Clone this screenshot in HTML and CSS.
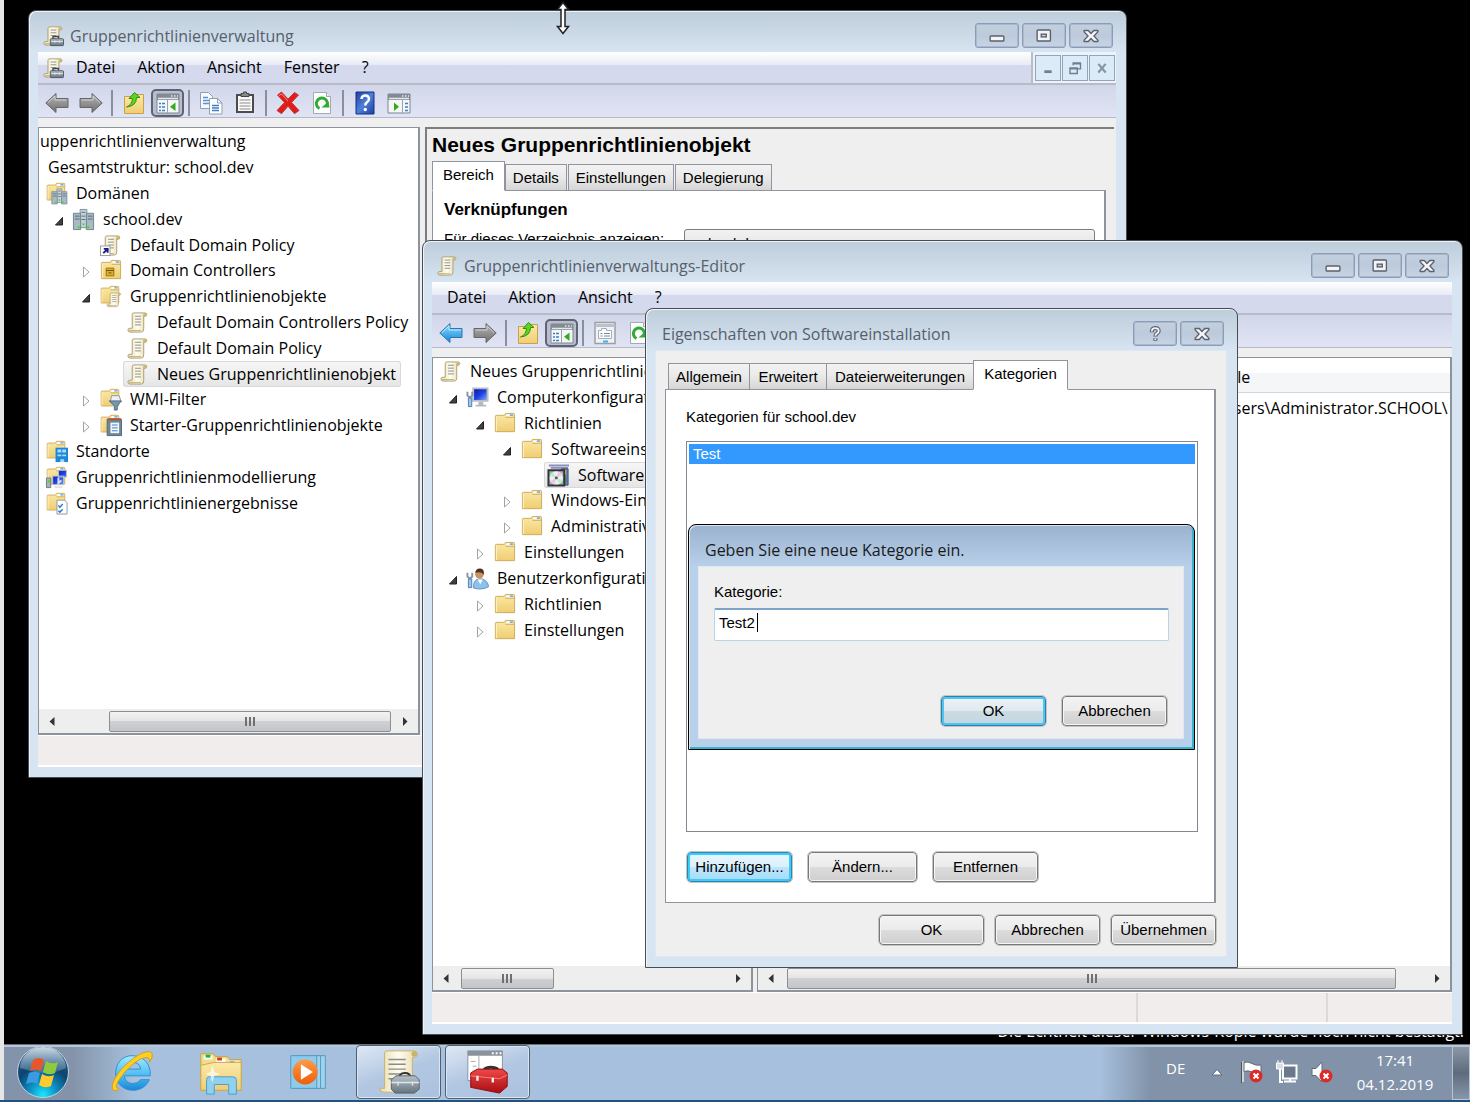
FILE: index.html
```
<!DOCTYPE html>
<html lang="de">
<head>
<meta charset="utf-8">
<title>Gruppenrichtlinienverwaltung</title>
<link rel="stylesheet" href="styles.css">
</head>
<body>
<svg class="sprite" aria-hidden="true">
  <defs>
    <linearGradient id="paper" x1="0" x2="1" y1="0" y2="0"><stop offset="0" stop-color="#e9dcae"/><stop offset=".5" stop-color="#fffdf0"/><stop offset="1" stop-color="#e6d9ac"/></linearGradient>
    <linearGradient id="fold" x1="0" x2="0" y1="0" y2="1"><stop offset="0" stop-color="#fbe9a8"/><stop offset="1" stop-color="#f0cd72"/></linearGradient>
    <linearGradient id="grayarrow" x1="0" x2="0" y1="0" y2="1"><stop offset="0" stop-color="#b5b5b5"/><stop offset="1" stop-color="#707070"/></linearGradient>
    <linearGradient id="bluearrow" x1="0" x2="0" y1="0" y2="1"><stop offset="0" stop-color="#8fdcff"/><stop offset="1" stop-color="#1586d8"/></linearGradient>
    <linearGradient id="screen" x1="0" x2="1" y1="0" y2="1"><stop offset="0" stop-color="#0a14a8"/><stop offset=".5" stop-color="#1d3fe0"/><stop offset="1" stop-color="#8fb6ff"/></linearGradient>
    <linearGradient id="helpblue" x1="0" x2="1" y1="0" y2="1"><stop offset="0" stop-color="#1c3f9e"/><stop offset=".5" stop-color="#4f7fdc"/><stop offset="1" stop-color="#1c3f9e"/></linearGradient>
    <radialGradient id="orb" cx=".5" cy=".95" r=".95"><stop offset="0" stop-color="#16e8ff"/><stop offset=".3" stop-color="#0d8cc0"/><stop offset=".6" stop-color="#0d4470"/><stop offset="1" stop-color="#35597c"/></radialGradient>
    <linearGradient id="gloss" x1="0" x2="0" y1="0" y2="1"><stop offset="0" stop-color="#e8f2f8" stop-opacity=".85"/><stop offset="1" stop-color="#7fa6c0" stop-opacity=".35"/></linearGradient>
    <linearGradient id="ieblue" x1="0" x2="0" y1="0" y2="1"><stop offset="0" stop-color="#a5ecff"/><stop offset=".6" stop-color="#45b9f2"/><stop offset="1" stop-color="#1c86d6"/></linearGradient>
    <linearGradient id="redbox" x1="0" x2="0" y1="0" y2="1"><stop offset="0" stop-color="#f04848"/><stop offset="1" stop-color="#a80c10"/></linearGradient>
    <linearGradient id="graybox" x1="0" x2="0" y1="0" y2="1"><stop offset="0" stop-color="#b6c0c8"/><stop offset="1" stop-color="#67747e"/></linearGradient>
    <linearGradient id="orange" x1="0" x2="0" y1="0" y2="1"><stop offset="0" stop-color="#ff9a4a"/><stop offset="1" stop-color="#ee5f08"/></linearGradient>
  </defs>
  <symbol id="open" viewBox="0 0 12 12"><path d="M9.500 2.500v7.500h-7z" fill="#404040" stroke="#222"/></symbol>
  <symbol id="closed" viewBox="0 0 12 12"><path d="M3.500 1l5.500 5-5.500 5z" fill="#fff" stroke="#a3a3a3"/></symbol>
  <symbol id="scroll" viewBox="0 0 24 24"><path d="M6.500 18V3.500q0-1.500 2-1.500h11q2.500 0 2.200 2.200-.3 1.300-1.700 1.300h-1.500V18q.2 4-2.500 4H4.500Q2 22 2 20q0-2 2-2z" fill="url(#paper)" stroke="#aa9f74"/><path d="M3.500 20.500h12M18.500 5.500V3.500" stroke="#b9a96c" fill="none"/><path d="M9.500 5.500h6M9.500 8.500h6M9.500 11.500h6M9.500 14.500h6" stroke="#8b8b8b"/><circle cx="20.300" cy="3.600" r="1.700" fill="#cbb872"/></symbol>
  <symbol id="policy" viewBox="0 0 24 24"><use href="#scroll"/><path d="M12 15v-2.500h6V15" fill="none" stroke="#3e474e" stroke-width="1.500"/><rect x="9" y="15" width="14.500" height="7.500" rx="1" fill="url(#graybox)" stroke="#4d5860"/><path d="M10 18h13M14 17v2.500M19 17v2.500" stroke="#e0e6ea"/></symbol>
  <symbol id="link" viewBox="0 0 24 24"><use href="#scroll"/><rect x="1.500" y="12.500" width="10" height="10" fill="#fff" stroke="#9a9a9a"/><path d="M4.500 20l4-4M5 15.500h4v4" stroke="#1b1b7c" stroke-width="2" fill="none"/></symbol>
  <symbol id="folder" viewBox="0 0 24 24"><path d="M2.500 20.500V4.500q0-1 1-1H12l1-2h8.500q1 0 1 1v18z" fill="url(#fold)" stroke="#cda95a"/><path d="M13 5.500h9" stroke="#cda95a"/><rect x="14" y="2.500" width="7" height="2" fill="#fff"/><rect x="17.500" y="2.500" width="3.500" height="1.500" fill="#54a4e8"/><path d="M3.500 5v15" stroke="#fff4c8"/></symbol>
  <symbol id="towers" viewBox="0 0 24 24"><path d="M8.500 1.500h7v19h-7z" fill="#c5d2da" stroke="#7e8f9a"/><path d="M1.500 5.500h7.500v17H1.500zM15 5.500h7.500v17H15z" fill="#a9bac4" stroke="#71838f"/><path d="M3 8.500h5M3 11.500h5M16.500 8.500h5M16.500 11.500h5M10 4.500h4M10 8.500h4M10 12h4" stroke="#576873"/><path d="M6 19h2v2H6zM16 19h2v2h-2zM11 16h2v2h-2z" fill="#37e01c"/></symbol>
  <symbol id="domains" viewBox="0 0 24 24"><use href="#folder" width="22" height="22"/><use href="#towers" x="6" y="6" width="18" height="18"/></symbol>
  <symbol id="ou" viewBox="0 0 24 24"><use href="#folder"/><path d="M7.500 9.500h8v8h-8z" fill="#dcae2e" stroke="#94700f"/><path d="M7.500 12h8M10 14.500h3" stroke="#6d5206"/></symbol>
  <symbol id="gpos" viewBox="0 0 24 24"><use href="#folder" width="22" height="22"/><use href="#scroll" x="7" y="7" width="17" height="17"/></symbol>
  <symbol id="wmi" viewBox="0 0 24 24"><use href="#folder" width="22" height="22"/><path d="M13 8h8l2 6H12z" fill="#eef0f2" stroke="#8d969d"/><path d="M10.500 13.500h13L19 18.500v4.500h-3v-4.500z" fill="#7597b2" stroke="#4c6c86"/></symbol>
  <symbol id="starter" viewBox="0 0 24 24"><use href="#folder" width="22" height="22"/><path d="M8.500 5.500h15v17h-15z" fill="#6f8795" stroke="#536977"/><path d="M9 5.500h14" stroke="#b4502e" stroke-width="2"/><path d="M12 9h9v11h-9z" fill="#f2f8ff"/><path d="M13.500 11.500h6M13.500 14.500h6M13.500 17.500h6" stroke="#3f7cc0"/></symbol>
  <symbol id="sites" viewBox="0 0 24 24"><use href="#folder" width="22" height="22"/><path d="M11 8h13v15H11z" fill="#1d86d8"/><path d="M13 10h4v3h-4zM18 10h4v3h-4zM13 15h4v2h-4zM18 15h4v2h-4zM16 20h4v3h-4z" fill="#a8dcff"/></symbol>
  <symbol id="model" viewBox="0 0 24 24"><use href="#folder" width="22" height="22"/><path d="M14 4.500h8.500v7H14zM8 10.500h11.500v9H8z" fill="url(#screen)" stroke="#c0c4cc"/><path d="M1.500 12.500h4.500v10H1.500z" fill="#a9b4ba" stroke="#6e7a80"/><path d="M3 15h2v2H3z" fill="#37e01c"/><path d="M10 22h8M14 12v6l3-3" stroke="#dfe3e8" stroke-width="2" fill="none"/></symbol>
  <symbol id="results" viewBox="0 0 24 24"><use href="#folder" width="22" height="22"/><path d="M12.500 8.500h8l2.500 2.500v12H12.500z" fill="#fff" stroke="#8f98a0"/><path d="M14 14l1.500 2 3-3.500M14 19.500l1.500 1.500 3-3" stroke="#2a7fc8" stroke-width="1.500" fill="none"/></symbol>
  <symbol id="computer" viewBox="0 0 24 24"><path d="M7.500 2.500h15v13h-15z" fill="url(#screen)" stroke="#b9bdc4" stroke-width="2"/><path d="M13 16.500h5v3h3v2H10v-2h3z" fill="#b4b9bf"/><use href="#wrench"/></symbol>
  <symbol id="wrench" viewBox="0 0 24 24"><path d="M1.500 6v4l2.500 2 2.500-2V6" stroke="#8b959d" stroke-width="2" fill="none"/><path d="M2.500 12.500h3.500v9H2.500z" fill="#9cc6ee" stroke="#4a7db0"/></symbol>
  <symbol id="user" viewBox="0 0 24 24"><path d="M8 22q-1-8 5-9.500h4q6 2 6.500 8-7 4-15.500 1.500z" fill="#8fc1ea" stroke="#5e93bf"/><path d="M12 13l3 5 2.500-5z" fill="#fff"/><circle cx="14" cy="7.500" r="4.500" fill="#c9925f"/><path d="M9.500 6q1-5 5.500-4.500T18.500 8Q16 4.500 9.500 6z" fill="#4a3423"/><use href="#wrench"/></symbol>
  <symbol id="software" viewBox="0 0 24 24"><path d="M2 1.500h21M4 4h18" stroke="#8b8fbc" stroke-width="2"/><path d="M15 5h7v17h-7z" fill="#5c7fb8" stroke="#3f4e78"/><path d="M16 6h4v5h-4z" fill="#f5b52e"/><path d="M16 14h4v5h-4z" fill="#3c9a3c"/><path d="M1.500 6.500h16.500v16H1.500z" fill="#a9adb2" stroke="#333" stroke-width="2"/><circle cx="9.700" cy="14.500" r="7" fill="#eceef6"/><path d="M9.700 14.500l-6.500-2.500 3-3.500zM9.700 14.500l6.500 2.500-3 3.500z" fill="#b4f0bc"/><path d="M9.700 14.500l2-6.500 4 3.500zM9.700 14.500l-2 6.500-4-3.500z" fill="#f2c0ee"/><circle cx="9.700" cy="14.500" r="1.500" fill="#555"/></symbol>
  <symbol id="back" viewBox="0 0 24 24"><path d="M.8 12L11 2.500v5h12v9H11v5z" fill="url(#grayarrow)" stroke="#666"/><path d="M3 11.500l7-6.500v4h11.500" stroke="#d0d0d0" fill="none"/></symbol>
  <symbol id="backblue" viewBox="0 0 24 24"><path d="M.8 12L11 2.500v5h12v9H11v5z" fill="url(#bluearrow)" stroke="#2c76b4"/><path d="M3 11.500l7-6.500v4h11.500" stroke="#b8ecff" fill="none"/></symbol>
  <symbol id="forward" viewBox="0 0 24 24"><path d="M23.200 12L13 2.500v5H1v9h12v5z" fill="url(#grayarrow)" stroke="#666"/><path d="M21 11.500L14 5v4H2.500" stroke="#d0d0d0" fill="none"/></symbol>
  <symbol id="up" viewBox="0 0 24 24"><path d="M2.500 22.500v-17h8l2-2h9v19z" fill="url(#fold)" stroke="#c9a04b"/><path d="M4.500 16Q10 14 10.500 7.500H7L12.500 1.500l5.500 5h-3.500Q14.500 15 4.500 16z" fill="#5fd321" stroke="#2f930c"/></symbol>
  <symbol id="console" viewBox="0 0 24 24"><path d="M1 3h22v19H1z" fill="#f4f6f8" stroke="#7e8790"/><path d="M1 3h22v6H1z" fill="#828b94"/><path d="M15 5h1.500M18 5h1.500M21 5h1M2 7.500h20" stroke="#e4e8ec" stroke-width="1.500"/><path d="M11.500 9v13" stroke="#9aa3ab"/><path d="M3 12.500h2M6 12.500h3M3 16h2M6 16h3M3 19.500h2M6 19.500h3" stroke="#3c7fc8" stroke-width="1.500"/><path d="M19.500 11.500v8.500L14 15.800z" fill="#2fae1a"/></symbol>
  <symbol id="actions" viewBox="0 0 24 24"><path d="M1 3h22v19H1z" fill="#f4f6f8" stroke="#7e8790"/><path d="M1 3h22v6H1z" fill="#828b94"/><path d="M15 5h1.500M18 5h1.500M21 5h1M2 7.500h20" stroke="#e4e8ec" stroke-width="1.500"/><path d="M15.500 9v13" stroke="#9aa3ab"/><path d="M18 12.500h3M18 16h3M18 19.500h3" stroke="#3c7fc8" stroke-width="1.500"/><path d="M7 11.500v8.500l5-4.200z" fill="#2fae1a"/></symbol>
  <symbol id="copy" viewBox="0 0 24 24"><path d="M1.500 1.500h8l4 4v12h-12z" fill="#f6f9fd" stroke="#8da1b5"/><path d="M4 6.500h5M4 9.500h6M4 12.500h6" stroke="#5f92cc" stroke-width="1.500"/><path d="M10.500 7.500h8l4.500 4.500v11H10.500z" fill="#fff" stroke="#8da1b5"/><path d="M18.500 7.500V12H23" fill="none" stroke="#8da1b5"/><path d="M13 14.500h7M13 17h7M13 19.500h7" stroke="#3f7fc6" stroke-width="1.500"/></symbol>
  <symbol id="paste" viewBox="0 0 24 24"><path d="M4 4h16v17H4z" fill="#fafafa" stroke="#4b4b4b" stroke-width="2"/><path d="M8 5.500v-3h2.500V1h3v1.500H16v3z" fill="#888" stroke="#444"/><path d="M6.500 9h11M6.500 12h11M6.500 15h11M6.500 18h11" stroke="#8d8d8d"/></symbol>
  <symbol id="delete" viewBox="0 0 24 24"><path d="M1.500 4l4-3L12 8l6.500-6.500L22.500 4 15.500 11.500 23 19.500l-4.500 3.200-6.500-7.500-6.500 7.500L1 19.500 8.500 11.500z" fill="#e31b1b" stroke="#b84040"/><path d="M3 4.500L5.500 3 12 10" stroke="#ff8a7a" fill="none"/></symbol>
  <symbol id="refresh" viewBox="0 0 24 24"><path d="M3.500 1.500h13l4 4v17h-17z" fill="#fff" stroke="#a6a9ac"/><path d="M16.500 1.500v4h4" stroke="#a6a9ac" fill="#eee"/><path d="M9.500 17.500a5.500 5.500 0 1 1 7-2" fill="none" stroke="#2fac36" stroke-width="3"/><path d="M11.500 16.500h8l-1-6z" fill="#2fac36"/></symbol>
  <symbol id="help" viewBox="0 0 24 24"><path d="M3 1h18v22H3z" fill="url(#helpblue)" stroke="#17317e"/><path d="M8.500 8q.3-3.500 3.800-3.500T16 8q0 2-2 3.300-1.700 1.200-1.700 3.200" fill="none" stroke="#fff" stroke-width="2.500"/><circle cx="12.300" cy="18.500" r="1.700" fill="#fff"/></symbol>
  <symbol id="props" viewBox="0 0 24 24"><path d="M2 1.500h20v21H2z" fill="#f0f2f4" stroke="#9aa0a6" stroke-width="1.500"/><path d="M2.500 4.500h19" stroke="#b8c2cc" stroke-width="3"/><path d="M5.500 9.500h3v-2h5v2h5v8h-13z" fill="#fff" stroke="#9fb0c0"/><path d="M7.500 12.500h2M11 12.500h6M7.500 15h2M11 15h6" stroke="#77889a"/><path d="M10 20.500h5" stroke="#35b6ea" stroke-width="2"/></symbol>
  <symbol id="min" viewBox="0 0 24 24"><rect x="4.500" y="12" width="15" height="5.500" rx="1" fill="#f4f4f4" stroke="#5a6070" stroke-width="1.500"/></symbol>
  <symbol id="max" viewBox="0 0 24 24"><rect x="4.500" y="5.500" width="14.500" height="12" rx="1" fill="#f4f4f4" stroke="#5a6070" stroke-width="1.500"/><rect x="9" y="10" width="5.500" height="3" fill="#c6d2e2" stroke="#5a6070" stroke-width="1.500"/></symbol>
  <symbol id="close" viewBox="0 0 24 24"><path d="M4.500 6h4.500l3 3.300L15 6h4.500v1.500L15.200 12l4.300 4.500V18H15l-3-3.300L9 18H4.500v-1.500L8.800 12 4.500 7.500z" fill="#f4f4f4" stroke="#5a6070" stroke-width="1.500" stroke-linejoin="round"/></symbol>
  <symbol id="ask" viewBox="0 0 24 24"><path d="M8.500 10q0-4.500 3.800-4.500t3.700 3.300q0 1.700-2 2.700-1.500.9-1.500 3.200M12.400 16.500v2.800" fill="none" stroke="#5a6070" stroke-width="4.500"/><path d="M8.500 9.200q0-3.700 3.800-3.700t3.700 3.300q0 1.700-2 2.700-1.500.9-1.500 2.500M12.400 16.800v1.700" fill="none" stroke="#f4f4f4" stroke-width="2"/></symbol>
  <symbol id="mdimin" viewBox="0 0 24 24"><path d="M8 16h8" stroke="#6f7f8f" stroke-width="3"/></symbol>
  <symbol id="mdirestore" viewBox="0 0 24 24"><path d="M10 9V6.500h8V13h-3M10 7.500h8M6.500 12h8v6h-8zM6.500 13h8" fill="none" stroke="#6f7f8f" stroke-width="1.500"/></symbol>
  <symbol id="mdiclose" viewBox="0 0 24 24"><path d="M8 7.500l8 9.500M16 7.500l-8 9.500" stroke="#8796a5" stroke-width="2.500"/></symbol>
  <symbol id="left" viewBox="0 0 12 12"><path d="M8.500 2v9L3.500 6.500z" fill="#333"/></symbol>
  <symbol id="right" viewBox="0 0 12 12"><path d="M4 2v9l4.500-4.500z" fill="#333"/></symbol>
</svg>

<div class="screen">
  <main class="desktop">
    <p class="watermark">Die Echtheit dieser Windows-Kopie wurde noch nicht bestätigt.</p>

    <section class="window window-main" aria-labelledby="t1">
      <header class="titlebar">
        <svg class="icon"><use href="#policy"/></svg>
        <h1 id="t1">Gruppenrichtlinienverwaltung</h1>
        <button class="frame-btn" aria-label="Minimieren"><svg class="icon"><use href="#min"/></svg></button>
        <button class="frame-btn" aria-label="Maximieren"><svg class="icon"><use href="#max"/></svg></button>
        <button class="frame-btn" aria-label="Schließen"><svg class="icon"><use href="#close"/></svg></button>
      </header>
      <nav class="menubar">
        <svg class="icon"><use href="#policy"/></svg>
        <button>Datei</button><button>Aktion</button><button>Ansicht</button><button>Fenster</button><button>?</button>
        <span class="mdi">
          <button aria-label="Minimieren"><svg class="icon"><use href="#mdimin"/></svg></button>
          <button aria-label="Wiederherstellen"><svg class="icon"><use href="#mdirestore"/></svg></button>
          <button aria-label="Schließen"><svg class="icon"><use href="#mdiclose"/></svg></button>
        </span>
      </nav>
      <div class="toolbar">
        <button aria-label="Zurück"><svg class="icon"><use href="#back"/></svg></button>
        <button aria-label="Vorwärts"><svg class="icon"><use href="#forward"/></svg></button>
        <i></i>
        <button aria-label="Nach oben"><svg class="icon"><use href="#up"/></svg></button>
        <button class="pressed" aria-label="Konsolenstruktur"><svg class="icon"><use href="#console"/></svg></button>
        <i></i>
        <button aria-label="Kopieren"><svg class="icon"><use href="#copy"/></svg></button>
        <button aria-label="Einfügen"><svg class="icon"><use href="#paste"/></svg></button>
        <i></i>
        <button aria-label="Löschen"><svg class="icon"><use href="#delete"/></svg></button>
        <button aria-label="Aktualisieren"><svg class="icon"><use href="#refresh"/></svg></button>
        <i></i>
        <button aria-label="Hilfe"><svg class="icon"><use href="#help"/></svg></button>
        <button aria-label="Aktionsbereich"><svg class="icon"><use href="#actions"/></svg></button>
      </div>
      <div class="panes panes-main">
        <div class="pane">
          <ul class="tree tree-main">
            <li class="cut">uppenrichtlinienverwaltung</li>
            <li class="cut inset">Gesamtstruktur: school.dev</li>
            <li><svg class="icon"><use href="#domains"/></svg><span>Domänen</span></li>
            <li class="l1"><svg class="twisty"><use href="#open"/></svg><svg class="icon"><use href="#towers"/></svg><span>school.dev</span></li>
            <li class="l2"><svg class="icon"><use href="#link"/></svg><span>Default Domain Policy</span></li>
            <li class="l2"><svg class="twisty"><use href="#closed"/></svg><svg class="icon"><use href="#ou"/></svg><span>Domain Controllers</span></li>
            <li class="l2"><svg class="twisty"><use href="#open"/></svg><svg class="icon"><use href="#gpos"/></svg><span>Gruppenrichtlinienobjekte</span></li>
            <li class="l3"><svg class="icon"><use href="#scroll"/></svg><span>Default Domain Controllers Policy</span></li>
            <li class="l3"><svg class="icon"><use href="#scroll"/></svg><span>Default Domain Policy</span></li>
            <li class="l3 selected"><svg class="icon"><use href="#scroll"/></svg><span>Neues Gruppenrichtlinienobjekt</span></li>
            <li class="l2"><svg class="twisty"><use href="#closed"/></svg><svg class="icon"><use href="#wmi"/></svg><span>WMI-Filter</span></li>
            <li class="l2"><svg class="twisty"><use href="#closed"/></svg><svg class="icon"><use href="#starter"/></svg><span>Starter-Gruppenrichtlinienobjekte</span></li>
            <li><svg class="icon"><use href="#sites"/></svg><span>Standorte</span></li>
            <li><svg class="icon"><use href="#model"/></svg><span>Gruppenrichtlinienmodellierung</span></li>
            <li><svg class="icon"><use href="#results"/></svg><span>Gruppenrichtlinienergebnisse</span></li>
          </ul>
          <div class="scrollbar bar-main"><svg><use href="#left"/></svg><b></b><span class="thumb"><i></i><i></i><i></i></span><b></b><svg><use href="#right"/></svg></div>
        </div>
        <div class="details">
          <h2>Neues Gruppenrichtlinienobjekt</h2>
          <div class="tabs tabs-main" role="tablist">
            <button role="tab" aria-selected="true">Bereich</button><button role="tab">Details</button><button role="tab">Einstellungen</button><button role="tab">Delegierung</button>
          </div>
          <div class="sheet sheet-main">
            <h3>Verknüpfungen</h3>
            <div class="field"><label for="dir">Für dieses Verzeichnis anzeigen:</label>
            <select id="dir"><option>school.dev</option></select></div>
          </div>
        </div>
      </div>
      <footer class="status"></footer>
    </section>

    <section class="window window-editor" aria-labelledby="t2">
      <header class="titlebar">
        <svg class="icon"><use href="#scroll"/></svg>
        <h1 id="t2">Gruppenrichtlinienverwaltungs-Editor</h1>
        <button class="frame-btn" aria-label="Minimieren"><svg class="icon"><use href="#min"/></svg></button>
        <button class="frame-btn" aria-label="Maximieren"><svg class="icon"><use href="#max"/></svg></button>
        <button class="frame-btn" aria-label="Schließen"><svg class="icon"><use href="#close"/></svg></button>
      </header>
      <nav class="menubar menubar-editor">
        <button>Datei</button><button>Aktion</button><button>Ansicht</button><button>?</button>
      </nav>
      <div class="toolbar">
        <button aria-label="Zurück"><svg class="icon"><use href="#backblue"/></svg></button>
        <button aria-label="Vorwärts"><svg class="icon"><use href="#forward"/></svg></button>
        <i></i>
        <button aria-label="Nach oben"><svg class="icon"><use href="#up"/></svg></button>
        <button class="pressed" aria-label="Konsolenstruktur"><svg class="icon"><use href="#console"/></svg></button>
        <i></i>
        <button aria-label="Eigenschaften"><svg class="icon"><use href="#props"/></svg></button>
        <button aria-label="Aktualisieren"><svg class="icon"><use href="#refresh"/></svg></button>
      </div>
      <div class="panes panes-editor">
        <div class="pane">
          <ul class="tree tree-editor">
            <li><svg class="icon"><use href="#scroll"/></svg><span>Neues Gruppenrichtlinienobjekt</span></li>
            <li class="l1"><svg class="twisty"><use href="#open"/></svg><svg class="icon"><use href="#computer"/></svg><span>Computerkonfiguration</span></li>
            <li class="l2"><svg class="twisty"><use href="#open"/></svg><svg class="icon"><use href="#folder"/></svg><span>Richtlinien</span></li>
            <li class="l3"><svg class="twisty"><use href="#open"/></svg><svg class="icon"><use href="#folder"/></svg><span>Softwareeinstellungen</span></li>
            <li class="l4 selected"><svg class="icon"><use href="#software"/></svg><span>Softwareinstallation</span></li>
            <li class="l3"><svg class="twisty"><use href="#closed"/></svg><svg class="icon"><use href="#folder"/></svg><span>Windows-Einstellungen</span></li>
            <li class="l3"><svg class="twisty"><use href="#closed"/></svg><svg class="icon"><use href="#folder"/></svg><span>Administrative Vorlagen</span></li>
            <li class="l2"><svg class="twisty"><use href="#closed"/></svg><svg class="icon"><use href="#folder"/></svg><span>Einstellungen</span></li>
            <li class="l1"><svg class="twisty"><use href="#open"/></svg><svg class="icon"><use href="#user"/></svg><span>Benutzerkonfiguration</span></li>
            <li class="l2"><svg class="twisty"><use href="#closed"/></svg><svg class="icon"><use href="#folder"/></svg><span>Richtlinien</span></li>
            <li class="l2"><svg class="twisty"><use href="#closed"/></svg><svg class="icon"><use href="#folder"/></svg><span>Einstellungen</span></li>
          </ul>
          <div class="scrollbar bar-tree"><svg><use href="#left"/></svg><b></b><span class="thumb"><i></i><i></i><i></i></span><b></b><svg><use href="#right"/></svg></div>
        </div>
        <div class="pane">
          <table class="packages">
            <thead><tr><th class="name">Name</th><th>Quelle</th></tr></thead>
            <tbody><tr><td></td><td>C:\Users\Administrator.SCHOOL\</td></tr></tbody>
          </table>
          <div class="scrollbar bar-list"><svg><use href="#left"/></svg><b></b><span class="thumb"><i></i><i></i><i></i></span><b></b><svg><use href="#right"/></svg></div>
        </div>
      </div>
      <footer class="status"><span></span><span></span></footer>
    </section>

    <section class="window window-props" role="dialog" aria-labelledby="t3">
      <header class="titlebar">
        <h1 id="t3">Eigenschaften von Softwareinstallation</h1>
        <button class="frame-btn" aria-label="Hilfe"><svg class="icon"><use href="#ask"/></svg></button>
        <button class="frame-btn" aria-label="Schließen"><svg class="icon"><use href="#close"/></svg></button>
      </header>
      <div class="dialog-body">
        <div class="tabs tabs-props" role="tablist">
          <button role="tab">Allgemein</button><button role="tab">Erweitert</button><button role="tab">Dateierweiterungen</button><button role="tab" aria-selected="true">Kategorien</button>
        </div>
        <div class="sheet sheet-props">
          <p id="catlabel">Kategorien für school.dev</p>
          <ul class="listbox" role="listbox" aria-labelledby="catlabel"><li role="option" aria-selected="true">Test</li></ul>
          <div class="actions"><button class="btn hot">Hinzufügen...</button><button class="btn wide">Ändern...</button><button class="btn">Entfernen</button></div>
        </div>
        <div class="dialog-buttons"><button class="btn">OK</button><button class="btn">Abbrechen</button><button class="btn">Übernehmen</button></div>
      </div>
    </section>

    <section class="window window-input" role="dialog" aria-labelledby="t4">
      <header class="titlebar"><h1 id="t4">Geben Sie eine neue Kategorie ein.</h1></header>
      <form class="dialog-body">
        <label for="cat">Kategorie:</label>
        <div class="entry"><input id="cat" type="text" value="Test2"><span class="caret"></span></div>
        <div class="form-buttons"><button type="button" class="btn default">OK</button><button type="button" class="btn">Abbrechen</button></div>
      </form>
    </section>

    <svg class="pointer" viewBox="0 0 16 34" aria-hidden="true"><path d="M8 1.500l5.500 7H10v17h3.500L8 32.500l-5.500-7H6v-17H2.500z" fill="#fff" stroke="#222" stroke-width="1.500"/></svg>
  </main>

  <footer class="taskbar">
    <button class="orb" aria-label="Start"><svg viewBox="0 0 54 54"><circle cx="27" cy="27" r="25.500" fill="url(#orb)" stroke="#c2d2de"/><path d="M4 23A23 21 0 0 1 50 23Q38 29 27 28T4 23z" fill="url(#gloss)"/><path d="M17 15q6-4 11 0l-3 11q-5-3-11 0z" fill="#e8572a"/><path d="M30 16q6 4 12 1l-3 11q-6 3-12-1z" fill="#8fc93c"/><path d="M13 28q6-3 11 0l-3 11q-5-3-11 0z" fill="#3a9be0"/><path d="M26 29q6 4 12 1l-3 11q-6 3-12-1z" fill="#ffca2c"/></svg></button>
    <button class="task" aria-label="Internet Explorer"><svg viewBox="0 0 50 50"><path d="M25 8C15 8 8 16 8 26s7 18 18 18c8 0 14-4 17-11h-9q-3 4-8 4-8 0-9-8h27C45 17 37 8 25 8zm-8 14q2-7 9-7t8 7z" fill="url(#ieblue)" stroke="#2a8fd2"/><path d="M10 44C0 47 4 32 17 19 29 7 43 0 46 6q1 4-3 9 1-5-3-5C34 10 24 17 16 27 9 36 6 42 11 42z" fill="#fbd026" stroke="#d99a0c"/></svg></button>
    <button class="task" aria-label="Explorer"><svg viewBox="0 0 50 50"><path d="M4 6h13l2 3h13l2 3h12v32H4z" fill="#f3dc86" stroke="#c6a44c"/><path d="M7 8h9v4H7zM20 11h10v4H20zM32 14h12v4H32z" fill="#fff"/><path d="M9 7h5v3H9z" fill="#18b83c"/><path d="M21 10h5v3h-5z" fill="#d33a20"/><path d="M34 14h5v3h-5z" fill="#2c8ee8"/><path d="M4 18l14-3h28v29H4z" fill="url(#fold)" stroke="#caa750"/><path d="M10 48V33q0-3 3-3h24q4 0 4 3v15h-8V38H18v10z" fill="#8fd2f0" stroke="#4a9ccc"/><path d="M16 18l2 7 6 2-6 2-2 7-2-7-5-2 5-2z" fill="#fff" opacity=".7"/></svg></button>
    <button class="task" aria-label="Media Player"><svg viewBox="0 0 50 50"><path d="M12 8h29v34H12z" fill="#9fd3ee" stroke="#5599c0"/><path d="M9 8h27v34H9z" fill="#9fd3ee" stroke="#5599c0"/><path d="M5 8h27v34H5z" fill="#8ccbec" stroke="#5599c0"/><circle cx="20" cy="25" r="13" fill="url(#orange)"/><path d="M15.500 17v16L28 25z" fill="#fff"/></svg></button>
    <button class="task running" aria-label="Gruppenrichtlinienverwaltung"><svg viewBox="0 0 50 50"><path d="M10 42V5q0-2 3-2h27q4 0 4 4 0 3-5 3v33q0 3-4 3H9q-4 0-4-4z" fill="url(#paper)" stroke="#c3b273"/><circle cx="41" cy="6" r="3" fill="#ccb464"/><path d="M14 12h18M14 17h18M14 22h18M14 27h12M14 32h8" stroke="#8b8b8b" stroke-width="1.500"/><path d="M25 32q0-6 6-6t6 5" fill="none" stroke="#333" stroke-width="2"/><path d="M17 33l5-4h20l4 4v10l-5 4H21l-4-4z" fill="url(#graybox)" stroke="#56616a"/><path d="M17 36h29M24 35v4M39 35v4" stroke="#dfe5ea" stroke-width="1.500"/></svg></button>
    <button class="task running" aria-label="Gruppenrichtlinienverwaltungs-Editor"><svg viewBox="0 0 50 50"><path d="M4 3h36v31H4z" fill="#fff" stroke="#8a929c"/><path d="M4 3h36v5H4z" fill="#8a929c"/><path d="M29 5.500h2M33 5.500h2M37 5.500h2" stroke="#fff" stroke-width="2"/><path d="M15.500 8v26M7 14h5M9 19h4M9 24h4" stroke="#a0a7b0"/><path d="M20 26q0-6 8-6t8 5" fill="none" stroke="#333" stroke-width="3"/><path d="M7 26l7-4h26l5 4v14l-8 7-30-6z" fill="url(#redbox)" stroke="#8a0a0e"/><path d="M7 29l30 3 8-4" stroke="#ff8080" fill="none"/><path d="M14 29v5M30 31v5" stroke="#eee" stroke-width="2.500"/></svg></button>
    <div class="tray">
      <span class="lang">DE</span>
      <svg class="chev" viewBox="0 0 12 12"><path d="M1 9l5-5.500L11 9z" fill="#fff" stroke="#5c6a7c"/></svg>
      <svg class="tray-icon" viewBox="0 0 24 24"><path d="M2.500 2v21" stroke="#4b5563" stroke-width="3"/><path d="M3 1.500v21" stroke="#fff" stroke-width="1.500"/><path d="M4 2.500q4-1.500 8 1t9 1.500v8q-5 1-9-1t-8-.5z" fill="#fff" stroke="#5c6a7c"/><circle cx="16" cy="16" r="6.500" fill="#dc2a26"/><path d="M13.500 13.500l5 5M18.500 13.500l-5 5" stroke="#fff" stroke-width="2"/></svg>
      <svg class="tray-icon" viewBox="0 0 24 24"><path d="M8 5.500h13.500v13H8z" fill="#6a7a8c" stroke="#fff" stroke-width="2"/><path d="M9 21.500h12M15 19v2" stroke="#fff" stroke-width="2"/><path d="M1.500 3h7v6h-7zM3 0v3M7 0v3" fill="#d9dfe6" stroke="#fff"/><path d="M5 9v13h3" fill="none" stroke="#fff" stroke-width="2"/></svg>
      <svg class="tray-icon" viewBox="0 0 24 24"><path d="M2 8.500h4L12 2v20l-6-6.500H2z" fill="#fff" stroke="#5c6a7c"/><circle cx="16" cy="16" r="6.500" fill="#dc2a26"/><path d="M13.500 13.500l5 5M18.500 13.500l-5 5" stroke="#fff" stroke-width="2"/></svg>
      <time class="clock"><span>17:41</span><span>04.12.2019</span></time>
      <button class="peek" aria-label="Desktop anzeigen"></button>
    </div>
  </footer>
</div>
</body>
</html>
```
FILE: styles.css
```
* { box-sizing: border-box; }
body, h1, h2, h3, p, ul { margin: 0; padding: 0; }
body { background: #000; }
ul { list-style: none; }
button, input, select { font: inherit; color: inherit; margin: 0; }
button { padding: 0; border: 0; background: none; }
.sprite { position: absolute; width: 0; height: 0; }
.icon { width: 24px; height: 24px; flex: none; display: block; }

.screen {
  height: 100vh;
  display: flex;
  flex-direction: column;
  border-bottom: 2px solid #25527c;
  font: 16px/20px "Open Sans", "Noto Sans", sans-serif;
  color: #000;
}
.desktop { flex: 1; position: relative; overflow: hidden; border-left: 4px solid #e6e6e6; background: #000; }
.watermark { position: absolute; right: 6px; bottom: 3px; color: #fff; font-size: 16px; white-space: nowrap; }
.pointer { position: absolute; left: 551px; top: 1px; width: 16px; height: 34px; }

/* Window frames, freely placed on the desktop */
.window {
  position: absolute;
  display: flex;
  flex-direction: column;
  padding: 0 10px 10px 9px;
  border: 1px solid #4a4d50;
  border-radius: 8px 8px 0 0;
  background: linear-gradient(#becddb, #d7e4f1 42px);
  box-shadow: inset 1px 1px 0 #eef4fa;
}
.window-main { left: 24px; top: 10px; right: 343px; bottom: 266px; }
.window-editor { left: 418px; top: 240px; right: 7px; bottom: 9px; }
.window-props { left: 641px; top: 308px; width: 593px; }
.window-input {
  left: 684px; top: 524px; width: 507px;
  border-color: #000;
  background: linear-gradient(#99b2cf, #b9d0ea 42px);
  box-shadow: inset 1px 1px 0 #d8e6f4, inset -2px -2px 0 #35b2cc;
}

.titlebar { height: 41px; flex: none; display: flex; align-items: center; gap: 3px; padding: 8px 3px 0 4px; }
.titlebar .icon { width: 22px; height: 22px; }
.titlebar h1 { flex: 1; padding-left: 3px; font-size: 16px; font-weight: 400; color: #55606b; white-space: nowrap; }
.frame-btn {
  width: 44px; height: 25px;
  display: flex; align-items: center; justify-content: center;
  border: 1px solid #8d9bb8; border-radius: 3px;
  background: linear-gradient(#c3d0de, #bccadb 50%, #c6d4e4);
  box-shadow: inset 0 0 0 1px #abb9cf;
}

.menubar {
  height: 33px; flex: none;
  display: flex; align-items: center; gap: 22px;
  padding-left: 4px;
  border-bottom: 2px solid #b9bcc4;
  background: linear-gradient(#fff, #e8ebf6 13px, #d4d9ed 13px, #d4d9ed);
}
.menubar > button { padding-bottom: 2px; }
.menubar > .icon { width: 22px; height: 22px; margin-right: -10px; }
.menubar-editor { padding-left: 15px; }
.mdi { margin-left: auto; align-self: stretch; display: flex; align-items: center; gap: 1px; padding: 0 1px 0 2px; border-left: 2px solid #b9bcc4; background: #eef2fa; }
.mdi button { width: 26px; height: 26px; display: grid; place-items: center; border: 1px solid #93a5bb; background: #dcebf8; }
.mdi .icon { width: 22px; height: 22px; }

.toolbar {
  height: 33px; flex: none;
  display: flex; align-items: center;
  padding: 3px 0 0 2px;
  border-bottom: 1px solid #b4b9cc;
  background: linear-gradient(#d1d6ea, #e0e4f4);
}
.toolbar button { width: 34px; height: 28px; display: grid; place-items: center; }
.toolbar .pressed { width: 33px; border: 2px solid #5f6474; border-radius: 5px; background: #b9bdcc; margin-right: 1px; }
.toolbar i { width: 2px; height: 26px; margin: 0 4px 0 3px; background: #8b8f9c; }

.panes { flex: 1; min-height: 0; display: grid; padding: 9px 0 0; background: #efefef; }
.panes-main { grid-template-columns: 382px 1fr; column-gap: 5px; }
.panes-editor { grid-template-columns: 321px 1fr; column-gap: 4px; }
.pane { min-width: 0; display: flex; flex-direction: column; overflow: hidden; border: 2px solid #8c939c; border-width: 1px 2px 2px 1px; background: #fff; }
.status { height: 32px; flex: none; display: flex; justify-content: flex-end; background: #f0edec; border-top: 1px solid #fff; border-bottom: 2px solid #fff; }
.status span { width: 190px; border-left: 2px solid #dcdad8; }
.status span:last-child { width: 126px; }

/* Trees */
.tree { flex: none; display: grid; grid-auto-rows: 1fr; justify-items: start; white-space: nowrap; padding: 1px 0 0 1px; }
.tree-main { height: 388px; }
.tree-editor { height: 285px; }
.tree li { display: flex; align-items: center; padding-left: 5px; }
.tree .icon { width: 23px; height: 23px; margin-right: 8px; }
.tree li span { padding: 0 5px 1px 0; }
.tree .cut { padding-left: 0; padding-bottom: 1px; }
.tree .inset { padding-left: 8px; }
.tree .l1 { padding-left: 32px; }
.tree .l2 { padding-left: 59px; }
.tree .l3 { padding-left: 86px; }
.tree .l4 { padding-left: 113px; }
.twisty { width: 12px; height: 12px; margin: 3px 7px 0 -19px; }
.tree .selected { margin-left: 83px; padding-left: 3px; border-radius: 3px; background: linear-gradient(#f7f7f7, #e5e5e5); box-shadow: inset 0 0 0 1px #d9d9d9; }
.tree .selected.l4 { margin-left: 110px; }

/* Scroll bars */
.scrollbar { height: 24px; margin-top: auto; flex: none; display: flex; align-items: center; background: #eee; }
.scrollbar svg { width: 12px; height: 12px; margin: 0 7px; flex: none; }
.thumb {
  height: 21px;
  display: flex; justify-content: center; align-items: center; gap: 2px;
  border: 1px solid #8e8e8e; border-radius: 2px;
  background: linear-gradient(#f3f3f3, #e4e4e6 50%, #cfd0d3 50%, #c4c5c8);
}
.thumb i { width: 2px; height: 9px; background: #707070; }
.scrollbar b { flex: 1 1 0; }
.bar-main b:nth-of-type(1) { flex-grow: 44; }
.bar-main .thumb { flex: 282 1 0; }
.bar-tree b:nth-of-type(1) { flex-grow: 2; }
.bar-tree .thumb { flex: 92 1 0; }
.bar-tree b:nth-of-type(2) { flex-grow: 174; }
.bar-list b:nth-of-type(1) { flex-grow: 3; }
.bar-list .thumb { flex: 610 1 0; }
.bar-list b:nth-of-type(2) { flex-grow: 28; }

/* Classic-font content */
.details, .sheet, .tabs, .btn, .dialog-body { font-family: "Liberation Sans", Arial, sans-serif; font-size: 15px; }
.details { min-width: 0; margin-right: 2px; padding: 4px 8px 0 5px; overflow: hidden; border: solid #7d7d7d; border-width: 2px 0 0 2px; }
.details h2 { font-size: 21px; line-height: 24px; }
.tabs { position: relative; z-index: 1; display: flex; align-items: flex-end; margin-bottom: -1px; }
.tabs button { height: 27px; padding: 0 7px; margin-right: 1px; border: 1px solid #8f949e; background: linear-gradient(#f3f3f3, #e9e9e9 50%, #d5d5d5); white-space: nowrap; }
.tabs [aria-selected="true"] { height: 30px; padding: 0 10px 2px; margin-right: 0; border-bottom-color: #fff; background: #fff; }
.tabs-main { margin-top: 4px; }
.sheet { border: 1px solid #8f949e; border-right-width: 2px; background: #fff; }
.sheet-main { height: 600px; padding: 9px 9px 0 11px; }
.sheet-main h3 { font-size: 17px; line-height: 20px; }
.field { display: flex; align-items: flex-start; margin-top: 9px; }
.field label { width: 240px; }
.field select { flex: 1; height: 29px; padding-left: 8px; border: 1px solid #7d7d7d; border-radius: 3px; background: linear-gradient(#f2f2f2, #ddd); appearance: none; }

.packages { width: 100%; table-layout: fixed; border-collapse: collapse; white-space: nowrap; }
.packages th { height: 34px; padding: 4px 0 0; text-align: left; font-weight: 400; background: linear-gradient(#fff 15px, #f5f6f8 15px); border-bottom: 1px solid #d5d5d5; }
.packages td { height: 32px; padding: 0; overflow: hidden; }
.packages .name { width: 444px; padding-left: 8px; }

/* Dialogs */
.dialog-body { padding: 9px 10px 11px 9px; background: #efefef; border: 1px solid #dfe8f2; }
.btn {
  width: 105px; height: 30px;
  border: 1px solid #777; border-radius: 4px;
  background: linear-gradient(#f3f3f3, #ebebeb 50%, #dcdcdc 50%, #cfcfcf);
  box-shadow: inset 0 0 0 1px #f6f6f6;
  outline: 1px solid #c4c4c4;
  white-space: nowrap;
}
.btn.wide { width: 109px; }
.btn.hot { border-color: #2c86b8; background: linear-gradient(#eaf6fd, #d9f0fc 50%, #bee6fd 50%, #a7d9f5); box-shadow: inset 0 0 0 2px #37cdf8; }
.btn.default { border-color: #2f7fae; background: linear-gradient(#eef3f6, #dfe9ef 50%, #cbdbe3 50%, #c3d6e0); box-shadow: inset 0 0 0 2px #4cc6ee; }
.window-props .titlebar { padding-left: 4px; }
.tabs-props { padding-left: 3px; }
.tabs-props button { padding-left: 0; padding-right: 0; margin-right: 0; margin-left: -1px; }
.tabs-props button:nth-child(1) { width: 82px; margin-left: 0; }
.tabs-props button:nth-child(2) { width: 78px; }
.tabs-props button:nth-child(3) { width: 148px; }
.tabs-props button:nth-child(4) { width: 95px; }
.sheet-props { padding: 17px 16px 20px 20px; }
.listbox { height: 391px; margin: 14px 0 20px; padding: 2px; border: 1px solid #828790; }
.listbox li { height: 20px; padding-left: 4px; background: #3399ff; color: #fff; }
.actions, .dialog-buttons, .form-buttons { display: flex; gap: 16px; }
.dialog-buttons { justify-content: flex-end; gap: 11px; padding-top: 12px; }
.sheet-props .actions { padding-left: 1px; }

.window-input .dialog-body { padding: 15px 14px 12px 15px; }
.window-input .titlebar h1 { padding-left: 3px; color: #1a1a1a; }
.entry { position: relative; margin-top: 6px; }
.entry input { width: 100%; height: 33px; display: block; padding: 0 5px 5px 4px; border: 1px solid #b5d5ea; border-top: 2px solid #7ba4c8; border-radius: 2px; background: #fff; outline: 0; }
.caret { position: absolute; left: 43px; top: 5px; width: 1px; height: 19px; background: #000; }
.form-buttons { justify-content: flex-end; margin-top: 55px; padding-right: 2px; }

/* Taskbar */
.taskbar {
  height: 56px; flex: none;
  display: flex; align-items: center; gap: 3px;
  border-left: 4px solid #e6e6e6;
  background: linear-gradient(90deg, #8394aa 70px, #a7c0dd 130px, #a7c0dd calc(100% - 370px), #8293a9 calc(100% - 320px));
  box-shadow: inset 0 1px 0 #66717e, inset 0 3px 0 #b6c7dc;
}
.orb { width: 78px; margin-right: 4px; display: grid; place-items: center; }
.orb svg { width: 54px; height: 54px; display: block; }
.task { width: 86px; height: 54px; display: grid; place-items: center; }
.task svg { width: 48px; height: 48px; }
.running { width: 85px; margin-right: 1px; border: 1px solid #4f5f74; border-radius: 4px; background: linear-gradient(160deg, #dfe8f4, #b2c7e2 50%, #aac1df); box-shadow: inset 0 0 0 1px #dbe6f3; }
.tray { margin-left: auto; align-self: stretch; display: flex; align-items: center; color: #fff; font-size: 15px; }
.lang { width: 45px; padding-bottom: 8px; }
.chev { width: 12px; height: 12px; margin-right: 17px; }
.tray-icon { width: 24px; height: 24px; margin-right: 11px; }
.clock { width: 84px; margin-left: 8px; margin-right: 15px; display: grid; text-align: center; line-height: 24px; }
.peek { width: 18px; height: 54px; align-self: flex-end; border: 1px solid #b8c4d2; background: linear-gradient(#8b98a8, #5e6b7c 50%, #8797ab); }
```
